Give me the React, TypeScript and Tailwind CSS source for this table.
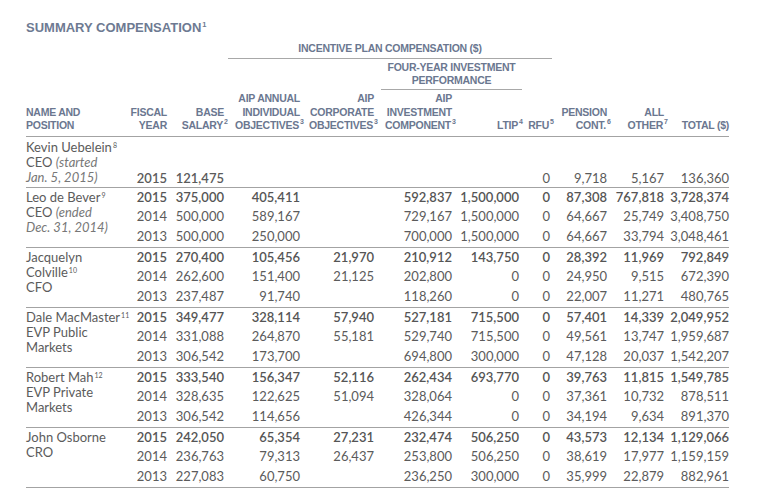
import React from 'react';

type Row = string[];

interface Person {
    name: React.ReactNode;
    rows: Row[];
}

const Sup: React.FC<{ n: string; hang?: boolean; size?: string }> = ({ n, hang, size }) => (
    <sup className={(hang ? 'inline-block w-0 ' : '') + (size || 'text-[7px]') + ' top-[-0.7em] pl-[1px] whitespace-nowrap text-left'}>{n}</sup>
);

const NameSup: React.FC<{ n: string }> = ({ n }) => (
    <sup className="text-[7px] top-[-0.55em] pl-[1px] leading-none">{n}</sup>
);

const people: Person[] = [
    {
        name: (
            <>
                Leo de Bever<NameSup n="9" />
                <br />
                CEO <i className="text-[#777]">(ended</i>
                <br />
                <i className="text-[#777]">Dec. 31, 2014)</i>
            </>
        ),
        rows: [
            ['2015', '375,000', '405,411', '', '592,837', '1,500,000', '0', '87,308', '767,818', '3,728,374'],
            ['2014', '500,000', '589,167', '', '729,167', '1,500,000', '0', '64,667', '25,749', '3,408,750'],
            ['2013', '500,000', '250,000', '', '700,000', '1,500,000', '0', '64,667', '33,794', '3,048,461'],
        ],
    },
    {
        name: (
            <>
                Jacquelyn
                <br />
                Colville<NameSup n="10" />
                <br />
                CFO
            </>
        ),
        rows: [
            ['2015', '270,400', '105,456', '21,970', '210,912', '143,750', '0', '28,392', '11,969', '792,849'],
            ['2014', '262,600', '151,400', '21,125', '202,800', '0', '0', '24,950', '9,515', '672,390'],
            ['2013', '237,487', '91,740', '', '118,260', '0', '0', '22,007', '11,271', '480,765'],
        ],
    },
    {
        name: (
            <>
                Dale MacMaster<NameSup n="11" />
                <br />
                EVP Public
                <br />
                Markets
            </>
        ),
        rows: [
            ['2015', '349,477', '328,114', '57,940', '527,181', '715,500', '0', '57,401', '14,339', '2,049,952'],
            ['2014', '331,088', '264,870', '55,181', '529,740', '715,500', '0', '49,561', '13,747', '1,959,687'],
            ['2013', '306,542', '173,700', '', '694,800', '300,000', '0', '47,128', '20,037', '1,542,207'],
        ],
    },
    {
        name: (
            <>
                Robert Mah<NameSup n="12" />
                <br />
                EVP Private
                <br />
                Markets
            </>
        ),
        rows: [
            ['2015', '333,540', '156,347', '52,116', '262,434', '693,770', '0', '39,763', '11,815', '1,549,785'],
            ['2014', '328,635', '122,625', '51,094', '328,064', '0', '0', '37,361', '10,732', '878,511'],
            ['2013', '306,542', '114,656', '', '426,344', '0', '0', '34,194', '9,634', '891,370'],
        ],
    },
    {
        name: (
            <>
                John Osborne
                <br />
                CRO
            </>
        ),
        rows: [
            ['2015', '242,050', '65,354', '27,231', '232,474', '506,250', '0', '43,573', '12,134', '1,129,066'],
            ['2014', '236,763', '79,313', '26,437', '253,800', '506,250', '0', '38,619', '17,977', '1,159,159'],
            ['2013', '227,083', '60,750', '', '236,250', '300,000', '0', '35,999', '22,879', '882,961'],
        ],
    },
];

const hd = 'p-0 pt-[2px] pb-[3px] align-bottom text-right leading-[13.5px]';

export default function App() {
    return (
        <div
            className="w-[757px] h-[493px] bg-white pl-[26px] pt-[20px] overflow-hidden"
            style={{ fontFamily: 'Lato, "Liberation Sans", sans-serif' }}
        >
            <div className="font-['Liberation_Sans',Arial,sans-serif] text-[13px] leading-[16px] font-bold text-[#6d7a92]">
                SUMMARY COMPENSATION<Sup n="1" size="text-[7.5px]" />
            </div>

            <table className="mt-[6px] table-fixed border-collapse w-[703px] text-[#5b5b5b]">
                <colgroup>
                    <col className="w-[94px]" />
                    <col className="w-[47px]" />
                    <col className="w-[57px]" />
                    <col className="w-[76px]" />
                    <col className="w-[74px]" />
                    <col className="w-[78px]" />
                    <col className="w-[67px]" />
                    <col className="w-[31px]" />
                    <col className="w-[57px]" />
                    <col className="w-[57px]" />
                    <col className="w-[65px]" />
                </colgroup>
                <thead className="font-['Liberation_Sans',Arial,sans-serif] text-[10.5px] font-bold tracking-[-0.25px] text-[#6b7790]">
                    <tr>
                        <td colSpan={3} className="p-0" />
                        <td colSpan={5} className="p-0 align-bottom">
                            <div className="ml-[4px] -mr-[2px] border-b border-[#a8a8a8] pb-[3px] text-center leading-[13px] whitespace-nowrap">
                                INCENTIVE PLAN COMPENSATION ($)
                            </div>
                        </td>
                        <td colSpan={3} className="p-0" />
                    </tr>
                    <tr>
                        <td colSpan={5} className="p-0" />
                        <td colSpan={2} className="p-0 align-bottom">
                            <div className="ml-[7px] -mr-[3px] border-b border-[#a8a8a8] pt-[2px] pb-[2px] text-center leading-[13px]">
                                FOUR-YEAR INVESTMENT
                                <br />
                                PERFORMANCE
                            </div>
                        </td>
                        <td colSpan={4} className="p-0" />
                    </tr>
                    <tr className="border-b border-[#a3a3a3]">
                        <td className={hd + ' !text-left'}>
                            NAME AND
                            <br />
                            POSITION
                        </td>
                        <td className={hd}>
                            FISCAL
                            <br />
                            YEAR
                        </td>
                        <td className={hd + ' whitespace-nowrap'}>
                            BASE
                            <br />
                            SALARY<Sup n="2" hang />
                        </td>
                        <td className={hd + ' whitespace-nowrap'}>
                            AIP ANNUAL
                            <br />
                            INDIVIDUAL
                            <br />
                            OBJECTIVES<Sup n="3" hang />
                        </td>
                        <td className={hd + ' whitespace-nowrap'}>
                            AIP
                            <br />
                            CORPORATE
                            <br />
                            OBJECTIVES<Sup n="3" hang />
                        </td>
                        <td className={hd + ' whitespace-nowrap'}>
                            AIP
                            <br />
                            INVESTMENT
                            <br />
                            COMPONENT<Sup n="3" hang />
                        </td>
                        <td className={hd}>
                            LTIP<Sup n="4" hang />
                        </td>
                        <td className={hd}>
                            RFU<Sup n="5" hang />
                        </td>
                        <td className={hd + ' whitespace-nowrap'}>
                            PENSION
                            <br />
                            CONT.<Sup n="6" hang />
                        </td>
                        <td className={hd + ' whitespace-nowrap'}>
                            ALL
                            <br />
                            OTHER<Sup n="7" hang />
                        </td>
                        <td className={hd + ' whitespace-nowrap'}>TOTAL ($)</td>
                    </tr>
                </thead>

                {/* Kevin: single row, data sits on the last name line */}
                <tbody className="text-[13px] border-b border-[#a3a3a3]">
                    <tr>
                        <td className="p-0 pt-[3px] pb-[2px] align-top leading-[15px] whitespace-nowrap">
                            Kevin Uebelein<NameSup n="8" />
                            <br />
                            CEO <i className="text-[#777]">(started</i>
                            <br />
                            <i className="text-[#777]">Jan. 5, 2015)</i>
                        </td>
                        <td className="p-0 pb-[1px] align-bottom text-right leading-[15px] font-semibold">2015</td>
                        <td className="p-0 pb-[1px] align-bottom text-right leading-[15px] font-semibold">121,475</td>
                        <td className="p-0" />
                        <td className="p-0" />
                        <td className="p-0" />
                        <td className="p-0" />
                        <td className="p-0 pb-[1px] align-bottom text-right leading-[15px]">0</td>
                        <td className="p-0 pb-[1px] align-bottom text-right leading-[15px]">9,718</td>
                        <td className="p-0 pb-[1px] align-bottom text-right leading-[15px]">5,167</td>
                        <td className="p-0 pb-[1px] align-bottom text-right leading-[15px]">136,360</td>
                    </tr>
                </tbody>

                {people.map((p, pi) => (
                    <tbody key={pi} className="text-[13px] border-b border-[#a3a3a3]">
                        {p.rows.map((r, ri) => (
                            <tr key={ri} className={ri === 2 ? 'h-[19.5px]' : 'h-[20px]'}>
                                {ri === 0 && (
                                    <td rowSpan={3} className="p-0 pt-[2px] align-top leading-[15px] whitespace-nowrap">
                                        {p.name}
                                    </td>
                                )}
                                {r.map((v, ci) => (
                                    <td
                                        key={ci}
                                        className={
                                            'p-0 align-middle text-right leading-[19.5px] whitespace-nowrap' +
                                            (ri === 0 ? ' font-semibold text-[#555]' : '')
                                        }
                                    >
                                        {v}
                                    </td>
                                ))}
                            </tr>
                        ))}
                    </tbody>
                ))}
            </table>
        </div>
    );
}
